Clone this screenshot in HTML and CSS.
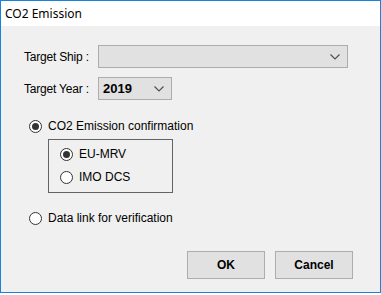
FILE: index.html
```html
<!DOCTYPE html>
<html lang="en">
<head>
  <meta charset="UTF-8" />
  <title>CO2 Emission</title>
  <link rel="stylesheet" href="styles.css">
</head>
<body>
  <div class="window">
    <div class="titlebar">CO2 Emission</div>

    <div class="content">
      <div class="field">
        <label class="field-label">Target Ship :</label>
        <div class="combo combo-ship">
          <span class="combo-value"></span>
          <svg class="chevron" width="10" height="6" viewBox="0 0 10 6"><path d="M0.5 0.5 L5 5 L9.5 0.5" fill="none" stroke="#505050" stroke-width="1.2"/></svg>
        </div>
      </div>

      <div class="field">
        <label class="field-label">Target Year :</label>
        <div class="combo combo-year">
          <span class="combo-value">2019</span>
          <svg class="chevron" width="10" height="6" viewBox="0 0 10 6"><path d="M0.5 0.5 L5 5 L9.5 0.5" fill="none" stroke="#505050" stroke-width="1.2"/></svg>
        </div>
      </div>

      <div class="radio-row main-option">
        <span class="radio checked"></span>
        <span>CO2 Emission confirmation</span>
      </div>

      <div class="group">
        <div class="radio-row">
          <span class="radio checked"></span>
          <span>EU-MRV</span>
        </div>
        <div class="radio-row">
          <span class="radio"></span>
          <span>IMO DCS</span>
        </div>
      </div>

      <div class="radio-row data-link">
        <span class="radio"></span>
        <span>Data link for verification</span>
      </div>

      <div class="buttons">
        <button class="btn">OK</button>
        <button class="btn">Cancel</button>
      </div>
    </div>
  </div>
</body>
</html>
```

FILE: styles.css
```css
body {
  margin: 0;
  padding: 0;
  background: #ffffff;
  font-family: "Liberation Sans", Arial, sans-serif;
  font-size: 12px;
  color: #000000;
}
.window {
  width: 381px;
  height: 293px;
  box-sizing: border-box;
  border: 1px solid #1883d7;
  background: #f0f0f0;
  display: flex;
  flex-direction: column;
}
.titlebar {
  height: 25px;
  background: #ffffff;
  font-family: "Noto Sans", "Open Sans", sans-serif;
  font-size: 12px;
  line-height: 25px;
  padding-left: 4px;
  color: #000000;
}
.content {
  flex: 1;
  display: flex;
  flex-direction: column;
  padding: 19px 27px 0 23px;
}
.field {
  display: flex;
  align-items: center;
  height: 23px;
  margin-bottom: 9px;
}
.field-label {
  width: 74px;
  letter-spacing: -0.2px;
}
.combo {
  height: 23px;
  box-sizing: border-box;
  border: 1px solid #adadad;
  background: #e1e1e1;
  display: flex;
  align-items: center;
  justify-content: space-between;
  padding: 0 7px 0 4px;
}
.combo-ship {
  width: 250px;
}
.combo-year {
  width: 74px;
}
.combo-value {
  font-weight: bold;
  font-size: 13px;
}
.chevron {
  display: block;
}
.radio-row {
  display: flex;
  align-items: center;
  height: 16px;
  gap: 6px;
}
.radio {
  width: 13px;
  height: 13px;
  box-sizing: border-box;
  border: 1px solid #333333;
  border-radius: 50%;
  background: #ffffff;
  position: relative;
}
.radio.checked::after {
  content: "";
  position: absolute;
  left: 2px;
  top: 2px;
  width: 7px;
  height: 7px;
  border-radius: 50%;
  background: #333333;
}
.main-option {
  margin-top: 9px;
  margin-left: 5px;
}
.group {
  margin-top: 5px;
  margin-left: 24px;
  width: 125px;
  height: 54px;
  box-sizing: border-box;
  border: 1px solid #646464;
  padding: 6px 0 0 11px;
  display: flex;
  flex-direction: column;
  gap: 7px;
}
.data-link {
  margin-top: 17px;
  margin-left: 5px;
}
.buttons {
  display: flex;
  justify-content: flex-end;
  gap: 10px;
  margin-top: 25px;
}
.btn {
  width: 78px;
  height: 28px;
  border: 1px solid #adadad;
  background: #e1e1e1;
  font-family: "Liberation Sans", Arial, sans-serif;
  font-size: 12px;
  font-weight: bold;
  color: #000000;
  padding: 0;
}
```
